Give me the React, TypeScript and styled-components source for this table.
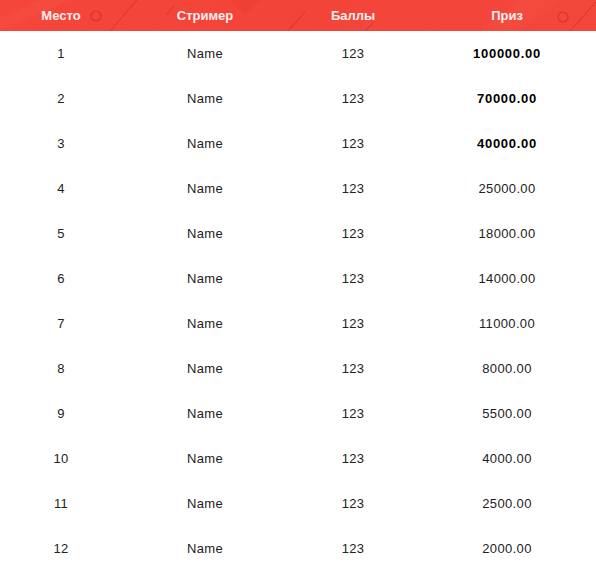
import React from "react";
import styled, { createGlobalStyle } from "styled-components";

const Global = createGlobalStyle`
  html, body { margin: 0; padding: 0; background: #fff; }
  body { font-family: "Liberation Sans", Arial, sans-serif; }
`;

const Table = styled.div`
  width: 596px;
  display: flex;
  flex-direction: column;
`;

const cols = "122px 166px 130px 178px";

const Header = styled.div`
  position: relative;
  height: 31px;
  display: grid;
  grid-template-columns: ${cols};
  align-items: center;
  background: linear-gradient(90deg, #f4463a 0%, #f3443a 50%, #f4473b 100%);
  overflow: hidden;
`;

const Deco = styled.svg`
  position: absolute;
  inset: 0;
  pointer-events: none;
`;

const HeadCell = styled.div`
  position: relative;
  text-align: center;
  color: #fdeeee;
  font-weight: bold;
  font-size: 13px;
  line-height: 31px;
`;

const Row = styled.div`
  height: 45px;
  display: grid;
  grid-template-columns: ${cols};
  align-items: center;
`;

const Cell = styled.div<{ $bold?: boolean }>`
  text-align: center;
  font-size: 13px;
  color: ${(p) => (p.$bold ? "#000" : "#222")};
  font-weight: ${(p) => (p.$bold ? "bold" : "normal")};
  letter-spacing: ${(p) => (p.$bold ? "0.7px" : "0.35px")};
`;

const prizes = [
  "100000.00",
  "70000.00",
  "40000.00",
  "25000.00",
  "18000.00",
  "14000.00",
  "11000.00",
  "8000.00",
  "5500.00",
  "4000.00",
  "2500.00",
  "2000.00",
];

export default function App() {
  return (
    <>
      <Global />
      <Table>
        <Header>
          <Deco width="596" height="31" viewBox="0 0 596 31">
            <polygon points="0,31 0,18 40,0 70,0" fill="#f6574a" opacity="0.35" />
            <polygon points="230,0 260,0 245,14" fill="#e23a30" opacity="0.35" />
            <polygon points="480,31 520,0 560,0 520,31" fill="#f65a4d" opacity="0.2" />
            <circle cx="96" cy="16" r="5" fill="none" stroke="#c9332b" strokeWidth="1.2" opacity="0.8" />
            <circle cx="563" cy="17" r="5" fill="none" stroke="#c9332b" strokeWidth="1.2" opacity="0.8" />
            <line x1="110" y1="31" x2="137" y2="0" stroke="#c9332b" strokeWidth="1" opacity="0.8" />
            <line x1="166" y1="15" x2="174" y2="6" stroke="#c9332b" strokeWidth="1" opacity="0.8" />
            <line x1="288" y1="31" x2="305" y2="12" stroke="#c9332b" strokeWidth="1" opacity="0.8" />
            <line x1="365" y1="31" x2="373" y2="23" stroke="#c9332b" strokeWidth="1" opacity="0.8" />
            <line x1="570" y1="31" x2="596" y2="2" stroke="#c9332b" strokeWidth="1" opacity="0.8" />
          </Deco>
          <HeadCell>Место</HeadCell>
          <HeadCell>Стример</HeadCell>
          <HeadCell>Баллы</HeadCell>
          <HeadCell>Приз</HeadCell>
        </Header>
        {prizes.map((p, i) => (
          <Row key={i}>
            <Cell>{i + 1}</Cell>
            <Cell>Name</Cell>
            <Cell>123</Cell>
            <Cell $bold={i < 3}>{p}</Cell>
          </Row>
        ))}
      </Table>
    </>
  );
}
